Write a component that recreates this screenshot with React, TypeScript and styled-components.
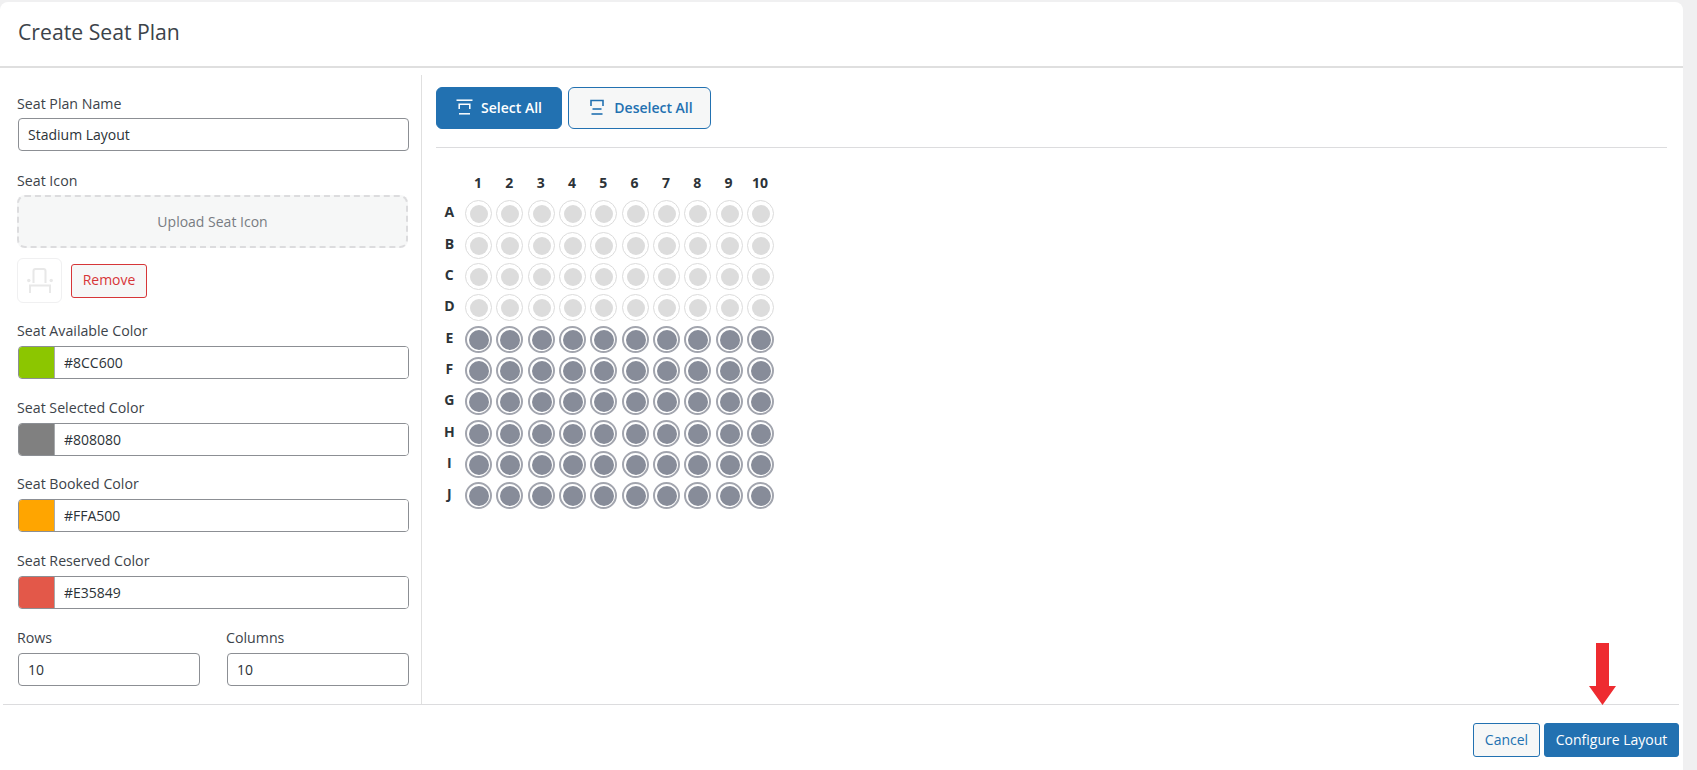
import React from "react";
import styled, { createGlobalStyle } from "styled-components";

const Global = createGlobalStyle`
  html, body { margin: 0; padding: 0; height: 100%; background: #f0f0f1; overflow: hidden; }
  body { font-family: "Open Sans", "Noto Sans", sans-serif; color: #3c434a; }
  * { box-sizing: border-box; }
`;
const Card = styled.div`
  position: relative; width: 1683px; height: 768px; margin-top: 2px; background: #fff;
  border-radius: 8px 8px 0 0; display: flex; flex-direction: column;
`;
const Header = styled.header`
  height: 66px; flex: none; border-bottom: 2px solid #dfdfdf; padding: 15px 0 0 18px;
`;
const Title = styled.h1`
  margin: 0; font-size: 21.2px; line-height: 30px; font-weight: 400; color: #3c434a;
`;
const Body = styled.div`
  display: flex; height: 629px; margin-top: 7px; flex: none;
`;
const Sidebar = styled.aside`
  width: 422px; flex: none; border-right: 1px solid #e0e0e0; padding: 19px 12px 0 17px;
`;
const Field = styled.div<{ $gap: number }>`
  margin-bottom: ${p => p.$gap}px;
`;
const Label = styled.label<{ $gap?: number }>`
  display: block; font-size: 14.2px; line-height: 20px; font-weight: 500; color: #3c434a;
  margin-bottom: ${p => p.$gap ?? 4}px;
`;
const TextInput = styled.input`
  display: block; height: 33px; margin-left: 1px; width: calc(100% - 1px);
  padding: 0 9px; border: 1px solid #8c8f94; border-radius: 4px; background: #fff;
  font: 400 14px "Open Sans", sans-serif; color: #2c3338; outline: none;
`;
const Upload = styled.div`
  height: 53px; margin-right: 1px; display: flex; align-items: center; justify-content: center; background: #f6f7f7;
  border: 2px dashed #dcdcde; border-radius: 8px; font-size: 14px; color: #787c82;
`;
const IconRow = styled.div`
  display: flex; align-items: center; gap: 9px; margin: 10px 0 18px;
`;
const Thumb = styled.div`
  width: 45px; height: 45px; display: flex; align-items: center; justify-content: center;
  border: 1px solid #f0f0f1; border-radius: 6px; background: #fff;
`;
const RemoveButton = styled.button`
  width: 76px; height: 34px; padding: 0 0 2px; border: 1px solid #d63638; border-radius: 3px; background: #f6f7f7;
  color: #d63638; font: 400 14px "Open Sans", sans-serif;
`;
const ColorBox = styled.div`
  display: flex; height: 33px; margin-left: 1px; border: 1px solid #8c8f94; border-radius: 4px; overflow: hidden; background: #fff;
`;
const Swatch = styled.div<{ $color: string }>`
  width: 36px; flex: none; background: ${p => p.$color}; border-right: 1px solid #a7aaad;
`;
const ColorValue = styled.input`
  flex: 1; min-width: 0; border: 0; padding: 0 9px; outline: none; background: #fff;
  font: 400 14px "Open Sans", sans-serif; color: #2c3338;
`;
const TwoCols = styled.div`
  display: grid; grid-template-columns: 183px 183px; column-gap: 26px;
`;
const Main = styled.main`
  flex: 1; min-width: 0; padding: 12px 16px 0 14px;
`;
const Toolbar = styled.div`
  display: flex; gap: 6px; padding-bottom: 18px; border-bottom: 1px solid #dcdcde;
`;
const ToolButton = styled.button<{ $primary?: boolean }>`
  display: flex; align-items: center; justify-content: center; height: 42px;
  gap: ${p => (p.$primary ? 8 : 10)}px;
  padding: 0 0 2px ${p => (p.$primary ? 0 : 4)}px;
  width: ${p => (p.$primary ? 126 : 143)}px;
  border: 1px solid #2271b1; border-radius: 6px;
  background: ${p => (p.$primary ? "#2271b1" : "#f6f7f7")};
  color: ${p => (p.$primary ? "#fff" : "#2271b1")};
  font: 600 14px "Open Sans", sans-serif;
`;
const SeatGrid = styled.div`
  display: grid; grid-template-columns: 24.67px repeat(10, 27px); column-gap: 4.33px; row-gap: 4.33px;
  margin-top: 21px; width: max-content;
`;
const ColHead = styled.div`
  height: 27px; line-height: 27px; text-align: center; padding-right: 1px; font-size: 14px; font-weight: 700; color: #2c3338;
`;
const RowHead = styled.div`
  height: 27px; line-height: 23px; text-align: center; padding-left: 2px; font-size: 14px; font-weight: 700; color: #2c3338;
`;
const Seat = styled.div<{ $active: boolean }>`
  width: 27px; height: 27px; border-radius: 50%; background-clip: content-box;
  ${p => p.$active
    ? `border: 2px solid #a2a5ae; padding: 1.5px; background-color: #878c99;`
    : `border: 1px solid #dcdcdc; padding: 3.5px; background-color: #dcdcdc;`}
`;
const Footer = styled.footer`
  flex: 1; margin: 0 4px 0 3px; border-top: 1px solid #dcdcde; display: flex; justify-content: flex-end;
  gap: 4px; padding-top: 18px; align-items: flex-start;
`;
const FootButton = styled.button<{ $primary?: boolean }>`
  height: 34px; padding: 0 0 2px; width: ${p => (p.$primary ? 135 : 67)}px; border: 1px solid #2271b1; border-radius: 3px;
  background: ${p => (p.$primary ? "#2271b1" : "#f6f7f7")}; color: ${p => (p.$primary ? "#fff" : "#2271b1")};
  font: 400 14px "Open Sans", sans-serif;
`;
const Arrow = styled.svg`
  position: absolute; left: 1589px; top: 641px; width: 27px; height: 62px;
`;

const Chair = () => (
  <svg width="26" height="26" viewBox="0 0 26 26" fill="none" stroke="#e8e8e8" strokeWidth="2">
    <path d="M6.5 15V3a2 2 0 0 1 2-2h8a2 2 0 0 1 2 2v12" />
    <circle cx="1.8" cy="12.5" r="1.7" fill="#e8e8e8" stroke="none" />
    <circle cx="24.2" cy="12.5" r="1.7" fill="#e8e8e8" stroke="none" />
    <path d="M3 25v-7.5h20V25" />
  </svg>
);
const SelectIcon = () => (
  <svg width="17" height="16" viewBox="0 0 17 16" fill="none" stroke="currentColor" strokeWidth="1.5">
    <path d="M0.5 1.2h16" /><path d="M3.2 10V5.2h10.6V10" /><path d="M3 14.8h11" />
  </svg>
);
const DeselectIcon = () => (
  <svg width="14" height="16" viewBox="0 0 14 16" fill="none" stroke="currentColor" strokeWidth="1.6">
    <path d="M1 7V1.5h12V7" /><path d="M2.5 10h9" /><path d="M1.5 15h11" />
  </svg>
);
const colors = [
  ["Seat Available Color", "#8CC600"],
  ["Seat Selected Color", "#808080"],
  ["Seat Booked Color", "#FFA500"],
  ["Seat Reserved Color", "#E35849"],
];
const rows = "ABCDEFGHIJ".split("");
const cols = Array.from({ length: 10 }, (_, i) => i + 1);

export default function App() {
  return (
    <>
      <Global />
      <Card>
        <Header><Title>Create Seat Plan</Title></Header>
        <Body>
          <Sidebar>
            <Field $gap={20}>
              <Label>Seat Plan Name</Label>
              <TextInput readOnly value="Stadium Layout" />
            </Field>
            <Label>Seat Icon</Label>
            <Upload>Upload Seat Icon</Upload>
            <IconRow>
              <Thumb><Chair /></Thumb>
              <RemoveButton>Remove</RemoveButton>
            </IconRow>
            {colors.map(([name, hex]) => (
              <Field key={name} $gap={18.67}>
                <Label $gap={5}>{name}</Label>
                <ColorBox>
                  <Swatch $color={hex} />
                  <ColorValue readOnly value={hex} />
                </ColorBox>
              </Field>
            ))}
            <TwoCols>
              <div><Label $gap={5}>Rows</Label><TextInput readOnly value="10" /></div>
              <div><Label $gap={5}>Columns</Label><TextInput readOnly value="10" /></div>
            </TwoCols>
          </Sidebar>
          <Main>
            <Toolbar>
              <ToolButton $primary><SelectIcon />Select All</ToolButton>
              <ToolButton><DeselectIcon />Deselect All</ToolButton>
            </Toolbar>
            <SeatGrid>
              <div />
              {cols.map(c => <ColHead key={c}>{c}</ColHead>)}
              {rows.map((r, i) => (
                <React.Fragment key={r}>
                  <RowHead>{r}</RowHead>
                  {cols.map(c => <Seat key={c} $active={i >= 4} />)}
                </React.Fragment>
              ))}
            </SeatGrid>
          </Main>
        </Body>
        <Footer>
          <FootButton>Cancel</FootButton>
          <FootButton $primary>Configure Layout</FootButton>
        </Footer>
        <Arrow viewBox="0 0 27 62">
          <path d="M7 0h13v43h7L13.5 62 0 43h7z" fill="#ee2b30" />
        </Arrow>
      </Card>
    </>
  );
}
